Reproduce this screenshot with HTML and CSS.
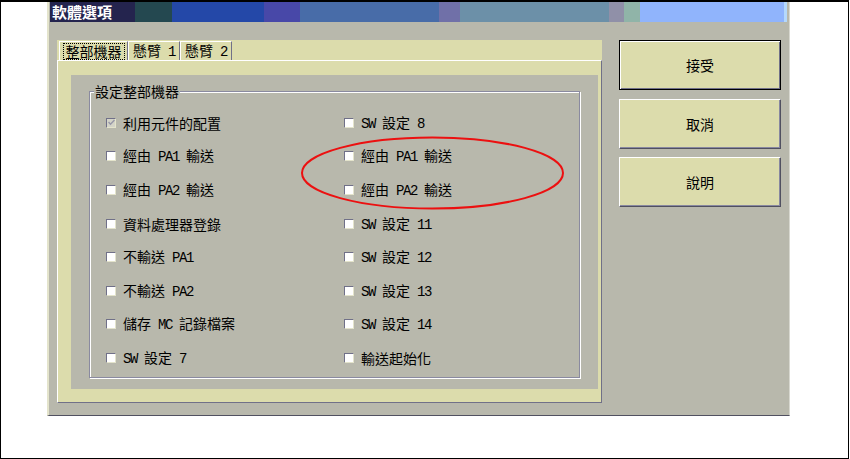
FILE: index.html
```html
<!DOCTYPE html>
<html lang="zh-Hant">
<head>
  <meta charset="UTF-8" />
  <title>軟體選項</title>
<link rel="stylesheet" href="styles.css">
</head>
<body>
  <div class="frame">
    <div class="window">
      <div class="titlebar">軟體選項</div>
      <div class="window-body">
        <div class="tabs">
          <div class="tab-row">
            <div class="tab selected"><span class="focus">整部機器</span></div>
            <div class="tab"><span>懸臂<span class="en"> 1</span></span></div>
            <div class="tab"><span>懸臂<span class="en"> 2</span></span></div>
          </div>
          <div class="page">
            <div class="page-inner">
              <div class="group">
                <span class="legend">設定整部機器</span>
                <div class="options">
                  <label class="opt"><span class="box checked"><svg width="7" height="7" viewBox="0 0 7 7"><polyline points="0.5,3 2.5,5.2 6.5,1" fill="none" stroke="#9898a8" stroke-width="1.5"/></svg></span><span>利用元件的配置</span></label>
                  <label class="opt"><span class="box"></span><span><span class="en">SW </span>設定<span class="en"> 8</span></span></label>

                  <label class="opt"><span class="box"></span><span>經由<span class="en"> PA1 </span>輸送</span></label>
                  <label class="opt"><span class="box"></span><span>經由<span class="en"> PA1 </span>輸送</span></label>

                  <label class="opt"><span class="box"></span><span>經由<span class="en"> PA2 </span>輸送</span></label>
                  <label class="opt"><span class="box"></span><span>經由<span class="en"> PA2 </span>輸送</span></label>

                  <label class="opt"><span class="box"></span><span>資料處理器登錄</span></label>
                  <label class="opt"><span class="box"></span><span><span class="en">SW </span>設定<span class="en"> 11</span></span></label>

                  <label class="opt"><span class="box"></span><span>不輸送<span class="en"> PA1</span></span></label>
                  <label class="opt"><span class="box"></span><span><span class="en">SW </span>設定<span class="en"> 12</span></span></label>

                  <label class="opt"><span class="box"></span><span>不輸送<span class="en"> PA2</span></span></label>
                  <label class="opt"><span class="box"></span><span><span class="en">SW </span>設定<span class="en"> 13</span></span></label>

                  <label class="opt"><span class="box"></span><span>儲存<span class="en"> MC </span>記錄檔案</span></label>
                  <label class="opt"><span class="box"></span><span><span class="en">SW </span>設定<span class="en"> 14</span></span></label>

                  <label class="opt"><span class="box"></span><span><span class="en">SW </span>設定<span class="en"> 7</span></span></label>
                  <label class="opt"><span class="box"></span><span>輸送起始化</span></label>
                </div>
              </div>
            </div>
          </div>
        </div>
        <div class="buttons">
          <div class="btn default">接受</div>
          <div class="btn">取消</div>
          <div class="btn">說明</div>
        </div>
      </div>
    </div>

    <!-- red mark drawn over the dialog -->
    <svg class="mark" width="266" height="76" viewBox="0 0 266 76">
      <ellipse cx="132.5" cy="37" rx="130.5" ry="35.5" fill="none" stroke="#ec1010" stroke-width="2"/>
    </svg>
  </div>
</body>
</html>
```

FILE: styles.css
```css
body {
  margin: 0;
  padding: 0;
  background: #ffffff;
  font-family: "Noto Sans CJK TC", sans-serif;
  font-size: 14px;
  color: #000;
}

.frame {
  position: relative;
  width: 849px;
  height: 459px;
  box-sizing: border-box;
  border: 1px solid #000;
  border-top-width: 2px;
  padding-left: 46px;
}

.window {
  width: 743px;
  height: 414px;
  box-sizing: border-box;
  background: #b8b8ac;
  border-left: 2px solid #e4e4cc;
  border-right: 1px solid #d8d8d0;
  border-bottom: 1px solid #505060;
}

.titlebar {
  height: 20px;
  margin: 0 2px 0 1px;
  padding-left: 2px;
  line-height: 20px;
  font-size: 15px;
  font-weight: bold;
  color: #fff;
  background: linear-gradient(to right,
    #24244e 0, #24244e 85px,
    #244850 85px, #244850 122px,
    #2448a8 122px, #2448a8 214px,
    #4848a8 214px, #4848a8 250px,
    #486ca8 250px, #486ca8 389px,
    #7070a8 389px, #7070a8 410px,
    #6c90a8 410px, #6c90a8 559px,
    #9090a8 559px, #9090a8 574px,
    #90b4a8 574px, #90b4a8 590px,
    #90b4fc 590px, #90b4fc 734px,
    #b4d8fc 734px);
}

.window-body {
  display: flex;
  padding: 18px 0 0 8px;
}

.en {
  font-family: "Liberation Mono", monospace;
  font-size: 14px;
  letter-spacing: -1.4px;
  white-space: pre;
}

/* tab control */
.tabs {
  width: 545px;
  height: 363px;
  display: flex;
  flex-direction: column;
  background: #dcdcac;
}

.tab-row {
  display: flex;
  height: 20px;
  padding-left: 2px;
}

.tab {
  width: 52px;
  height: 19px;
  margin-top: 1px;
  box-sizing: border-box;
  border-top: 1px solid #fff;
  border-left: 1px solid #fff;
  border-right: 1px solid #707088;
  display: flex;
  align-items: center;
  justify-content: center;
  line-height: 16px;
}

.tab.selected {
  width: 69px;
}

.focus {
  border: 1px dotted #000;
  padding: 0 2px;
  line-height: 15px;
}

.page {
  flex: 1;
  display: flex;
  border-top: 1px solid #fff;
  border-left: 1px solid #fff;
  border-right: 1px solid #707088;
  border-bottom: 1px solid #707088;
  padding: 14px 3px 13px 13px;
}

.page-inner {
  flex: 1;
  display: flex;
  flex-direction: column;
  background: #b8b8ac;
  padding: 16px 18px 11px 18px;
}

/* group box */
.group {
  position: relative;
  flex: 1;
  border: 1px solid #8a8aa0;
  box-shadow: 1px 1px 0 #fff, inset 1px 1px 0 #fff;
  padding: 14px 0 0 16px;
}

.legend {
  position: absolute;
  top: -9px;
  left: 4px;
  padding: 0 1px;
  background: #b8b8ac;
  line-height: 16px;
}

.options {
  display: grid;
  grid-template-columns: 238px 1fr;
  grid-auto-rows: 33.6px;
  align-items: center;
}

.opt {
  display: flex;
  align-items: center;
  line-height: 16px;
}

.box {
  width: 10px;
  height: 10px;
  box-sizing: border-box;
  margin-right: 7px;
  background: #fff;
  border-top: 1px solid #707088;
  border-left: 1px solid #707088;
  border-right: 1px solid #e4e4cc;
  border-bottom: 1px solid #e4e4cc;
  display: flex;
  align-items: center;
  justify-content: center;
}

.box.checked {
  background: #d4d4c8;
}

/* command buttons */
.buttons {
  margin-left: 17px;
  width: 162px;
  display: flex;
  flex-direction: column;
  gap: 8px;
}

.btn {
  height: 50px;
  box-sizing: border-box;
  background: #dcdcac;
  border-top: 1px solid #fff;
  border-left: 1px solid #fff;
  border-right: 1px solid #505060;
  border-bottom: 1px solid #505060;
  box-shadow: inset -1px -1px 0 #8888a0;
  display: flex;
  align-items: center;
  justify-content: center;
}

.btn.default {
  border: 1px solid #000;
  box-shadow: inset 1px 1px 0 #fff, inset -1px -1px 0 #707088;
  margin-bottom: 1px;
}

.mark {
  position: absolute;
  left: 299px;
  top: 134px;
}
```
